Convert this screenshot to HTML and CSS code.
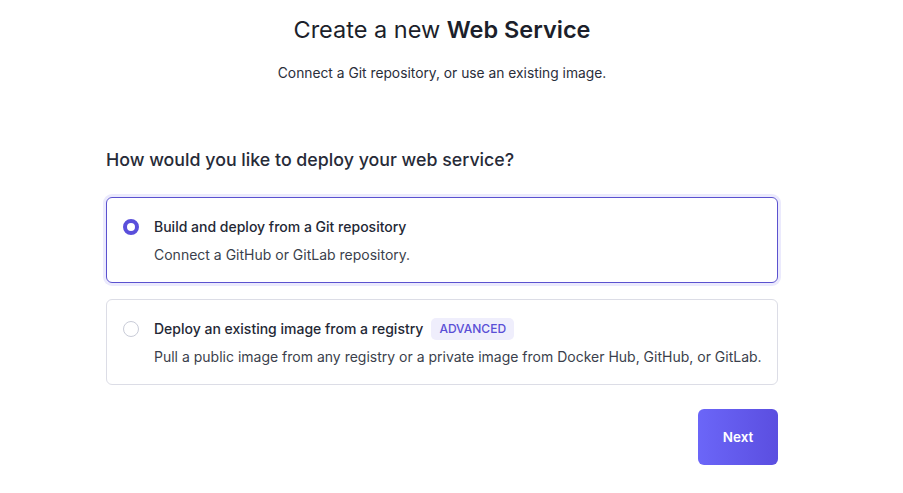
FILE: index.html
```html
<!DOCTYPE html>
<html>
<head>
<meta charset="utf-8">
<link rel="stylesheet" href="styles.css">
</head>
<body>
<div class="page">
  <header class="head">
    <h1 class="title">Create a new <strong>Web Service</strong></h1>
    <p class="subtitle">Connect a Git repository, or use an existing image.</p>
  </header>
  <section class="form">
    <h2 class="question">How would you like to deploy your web service?</h2>
    <div class="options">
      <label class="option selected">
        <span class="radio checked"></span>
        <span class="text">
          <span class="opt-title">Build and deploy from a Git repository</span>
          <span class="opt-desc">Connect a GitHub or GitLab repository.</span>
        </span>
      </label>
      <label class="option">
        <span class="radio"></span>
        <span class="text">
          <span class="opt-title">Deploy an existing image from a registry <span class="badge">ADVANCED</span></span>
          <span class="opt-desc">Pull a public image from any registry or a private image from Docker Hub, GitHub, or GitLab.</span>
        </span>
      </label>
    </div>
    <div class="actions">
      <button class="next">Next</button>
    </div>
  </section>
</div>
</body>
</html>
```

FILE: styles.css
```css
* { box-sizing: border-box; }
html, body { margin: 0; background: #fff; }
body {
  font-family: Inter, "Noto Sans", sans-serif;
  color: #1f2330;
}
.page {
  width: 672px;
  margin-left: 106px;
}
.head {
  text-align: center;
  padding-top: 14px;
}
.title {
  margin: 0;
  font-size: 23.5px;
  font-weight: 400;
  line-height: 32px;
  color: #1c1f2b;
}
.title strong { font-weight: 600; }
.subtitle {
  margin: 17px 0 0;
  font-size: 13.8px;
  line-height: 20px;
  color: #2a2e3a;
}
.form { padding-top: 65px; }
.question {
  margin: 0;
  font-size: 17.8px;
  font-weight: 500;
  line-height: 24px;
  color: #272b38;
}
.options {
  margin-top: 25px;
  display: flex;
  flex-direction: column;
  gap: 16px;
}
.option {
  display: flex;
  align-items: flex-start;
  gap: 15px;
  height: 86px;
  padding: 19px 8px 0 16px;
  border: 1px solid #dcdde6;
  border-radius: 6px;
}
.option.selected {
  border-color: #5b52cf;
  box-shadow: 0 0 0 3px #ebeafd;
}
.radio {
  flex: none;
  width: 16px;
  height: 16px;
  margin-top: 2px;
  border-radius: 50%;
  border: 1px solid #c9ccd8;
  background: #fff;
}
.radio.checked {
  border: 4px solid #5a4fdb;
}
.text {
  display: flex;
  flex-direction: column;
  gap: 8px;
  white-space: nowrap;
}
.opt-title {
  font-size: 14px;
  font-weight: 500;
  line-height: 20px;
  color: #242835;
  display: flex;
  align-items: center;
  gap: 8px;
}
.opt-desc {
  font-size: 14px;
  line-height: 20px;
  color: #3b3f4c;
}
.badge {
  display: inline-block;
  padding: 2px 8px;
  height: 22px;
  margin: -1px 0;
  line-height: 18px;
  font-size: 12px;
  font-weight: 500;
  color: #5a4fd6;
  background: #efeefc;
  border-radius: 5px;
}
.actions {
  display: flex;
  justify-content: flex-end;
  margin-top: 24px;
}
.next {
  width: 80px;
  height: 56px;
  border: none;
  border-radius: 6px;
  background: linear-gradient(90deg, #6b66f8, #5b4ee0);
  color: #fff;
  font-family: inherit;
  font-size: 13.5px;
  font-weight: 600;
}
```
